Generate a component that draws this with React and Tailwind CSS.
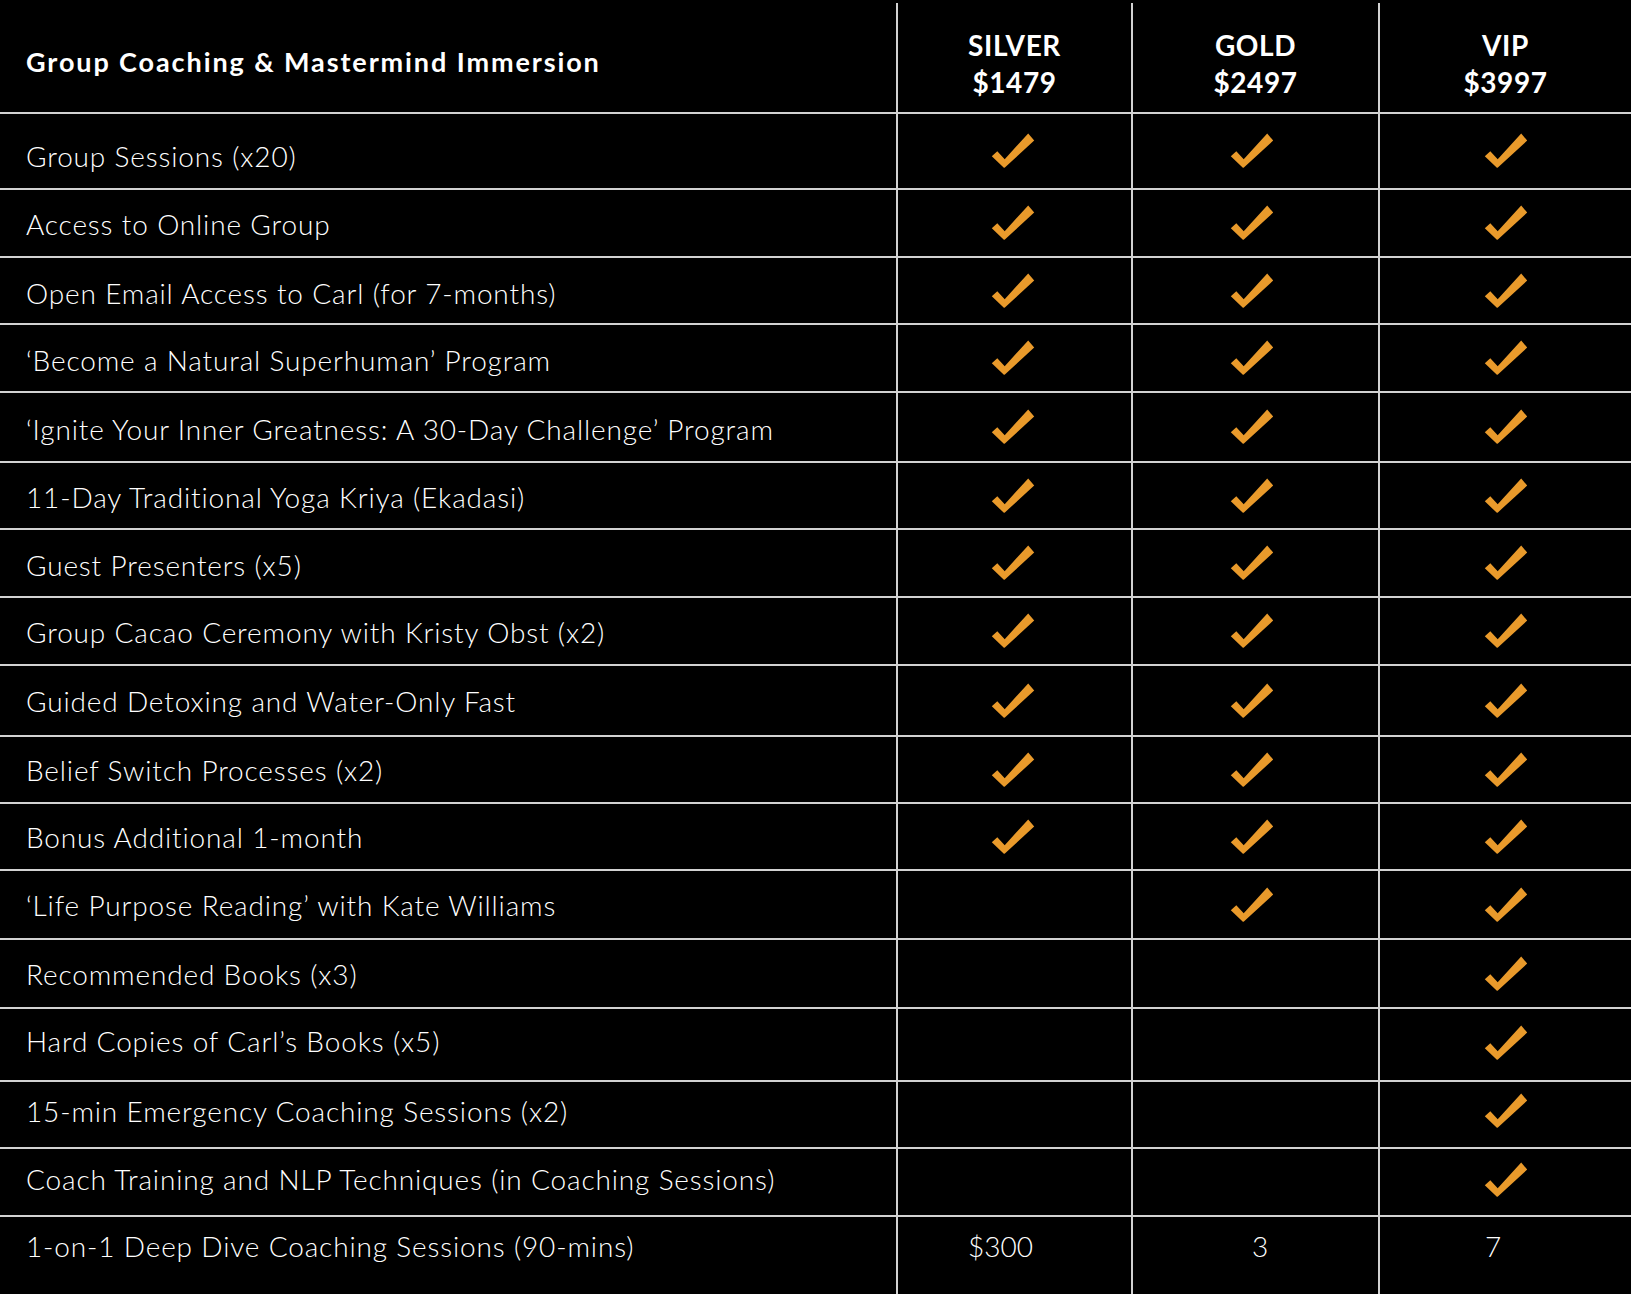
import React from "react";

const rows = [
  { label: "Group Sessions (x20)", h: "h-[76px]", c: [1, 1, 1], tp: "pt-[10px]", cp: "" },
  { label: "Access to Online Group", h: "h-[68px]", c: [1, 1, 1], tp: "pt-[2px]", cp: "" },
  { label: "Open Email Access to Carl (for 7-months)", h: "h-[67px]", c: [1, 1, 1], tp: "pt-[5px]", cp: "" },
  { label: "\u2018Become a Natural Superhuman\u2019 Program", h: "h-[68px]", c: [1, 1, 1], tp: "pt-[3px]", cp: "" },
  { label: "\u2018Ignite Your Inner Greatness: A 30-Day Challenge\u2019 Program", h: "h-[70px]", c: [1, 1, 1], tp: "pt-[3px]", cp: "" },
  { label: "11-Day Traditional Yoga Kriya (Ekadasi)", h: "h-[67px]", c: [1, 1, 1], tp: "pt-[3px]", cp: "" },
  { label: "Guest Presenters (x5)", h: "h-[68px]", c: [1, 1, 1], tp: "pt-[3px]", cp: "" },
  { label: "Group Cacao Ceremony with Kristy Obst (x2)", h: "h-[68px]", c: [1, 1, 1], tp: "pt-[2px]", cp: "" },
  { label: "Guided Detoxing and Water-Only Fast", h: "h-[71px]", c: [1, 1, 1], tp: "pt-[0px]", cp: "" },
  { label: "Belief Switch Processes (x2)", h: "h-[67px]", c: [1, 1, 1], tp: "pt-[0px]", cp: "" },
  { label: "Bonus Additional 1-month", h: "h-[67px]", c: [1, 1, 1], tp: "pt-[0px]", cp: "" },
  { label: "\u2018Life Purpose Reading\u2019 with Kate Williams", h: "h-[69px]", c: [0, 1, 1], tp: "pt-[0px]", cp: "" },
  { label: "Recommended Books (x3)", h: "h-[69px]", c: [0, 0, 1], tp: "pt-[0px]", cp: "" },
  { label: "Hard Copies of Carl\u2019s Books (x5)", h: "h-[73px]", c: [0, 0, 1], tp: "pb-[7px]", cp: "pb-[4px]" },
  { label: "15-min Emergency Coaching Sessions (x2)", h: "h-[67px]", c: [0, 0, 1], tp: "pb-[8px]", cp: "pb-[8px]" },
  { label: "Coach Training and NLP Techniques (in Coaching Sessions)", h: "h-[68px]", c: [0, 0, 1], tp: "pb-[7px]", cp: "pb-[5px]" },
];

const checkShift = ["pr-[4px]", "pr-[8px]", ""];

function Check() {
  return (
    <svg width="44" height="36" viewBox="0 0 44 36" className="block">
      <path
        d="M6.3 18.3 L0.8 23.3 L12.6 34.6 Q13.2 35.2 13.9 34.4 L43.2 7.6 L37.2 0.4 L13.7 26.2 Z"
        fill="#e99a2b"
      />
    </svg>
  );
}

const cellBase = "border-l-2 border-[#d2d2d2] flex items-center justify-center";

export default function App() {
  return (
    <div className="w-[1631px] h-[1294px] bg-black text-white font-['Lato','Liberation_Sans',sans-serif] pt-[3px] overflow-hidden">
      {/* header */}
      <div className="grid grid-cols-[896px_235px_247px_253px] h-[109px]">
        <div className="flex items-center pl-[26px] pt-[10px] text-[27px] font-bold tracking-[1.9px]">
          Group Coaching &amp; Mastermind Immersion
        </div>
        {[
          ["SILVER", "$1479"],
          ["GOLD", "$2497"],
          ["VIP", "$3997"],
        ].map(([t, p]) => (
          <div key={t} className={cellBase + " flex-col pt-[13px] text-[28px] font-bold leading-[37px] tracking-[0.6px]"}>
            <div>{t}</div>
            <div>{p}</div>
          </div>
        ))}
      </div>
      {rows.map((r) => (
        <div
          key={r.label}
          className={"grid grid-cols-[896px_235px_247px_253px] border-t-2 border-[#d2d2d2] " + r.h}
        >
          <div className={"flex items-center pl-[26px] text-[28px] font-light tracking-[0.85px] " + r.tp}>
            {r.label}
          </div>
          {r.c.map((v, i) => (
            <div key={i} className={cellBase + " " + checkShift[i] + " " + r.cp}>
              {v ? <Check /> : null}
            </div>
          ))}
        </div>
      ))}
      <div className="grid grid-cols-[896px_235px_247px_253px] border-t-2 border-[#d2d2d2] h-[79px]">
        <div className="flex items-center pl-[26px] pb-[20px] text-[28px] font-light tracking-[0.85px]">
          1-on-1 Deep Dive Coaching Sessions (90-mins)
        </div>
        <div className={cellBase + " pr-[28px] pb-[20px] text-[28px] font-light"}>$300</div>
        <div className={cellBase + " pl-[9px] pb-[20px] text-[28px] font-light"}>3</div>
        <div className={cellBase + " pr-[25px] pb-[20px] text-[28px] font-light"}>7</div>
      </div>
    </div>
  );
}
